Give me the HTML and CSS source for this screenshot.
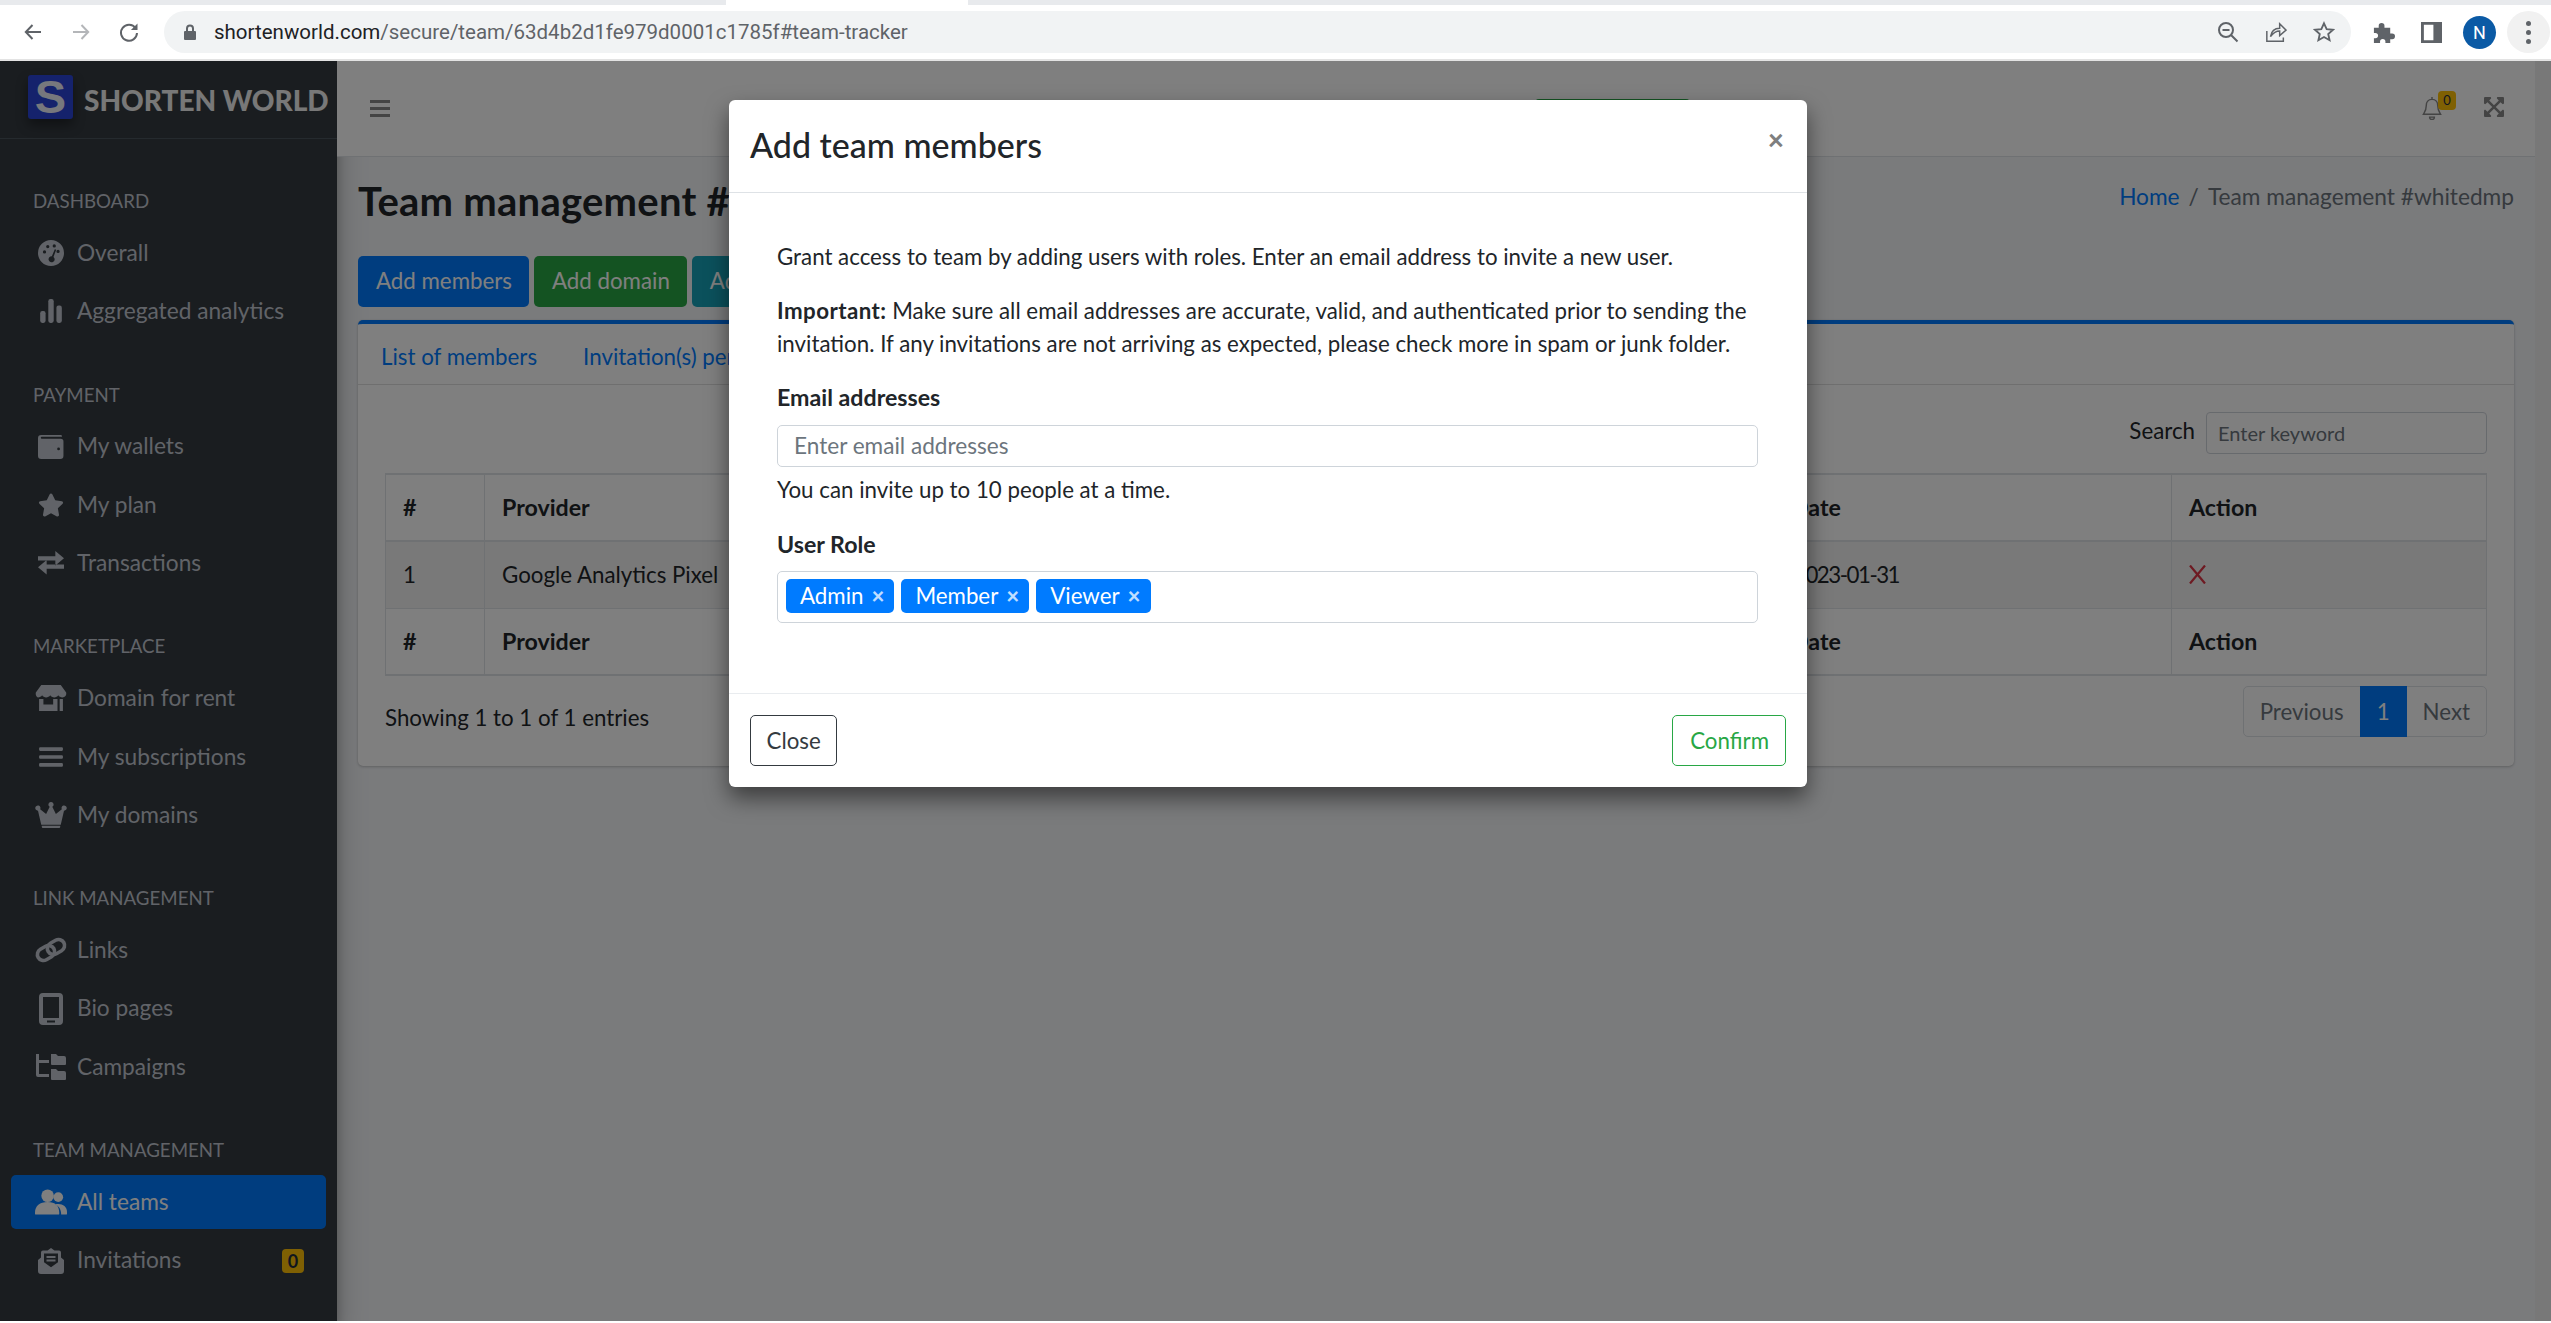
FILE: index.html
```html
<!DOCTYPE html>
<html lang="en">
<head>
<meta charset="utf-8">
<title>Team management</title>
<link rel="stylesheet" href="styles.css">
</head>
<body>
<div class="tabstrip"><div class="tab-gap"></div></div>
<div class="toolbar">
  <svg class="tb-icon" viewBox="0 0 20 20"><path d="M18 10H3M9.5 3L2.8 10l6.7 7" fill="none" stroke="#5f6368" stroke-width="2"/></svg>
  <svg class="tb-icon" viewBox="0 0 20 20"><path d="M2 10h15M10.5 3l6.7 7-6.7 7" fill="none" stroke="#b4b6b9" stroke-width="2"/></svg>
  <svg class="tb-icon" viewBox="0 0 20 20"><path d="M16.6 6.2A8 8 0 1 0 18 11" fill="none" stroke="#5f6368" stroke-width="2"/><path d="M18.5 1.5v6.6h-6.6z" fill="#5f6368"/></svg>
  <div class="omnibox">
    <svg class="lock" viewBox="0 0 12 16"><path d="M2 7V4.5a4 4 0 0 1 8 0V7h1a1 1 0 0 1 1 1v7a1 1 0 0 1-1 1H1a1 1 0 0 1-1-1V8a1 1 0 0 1 1-1zm2 0h4V4.500a2 2 0 0 0-4 0z" fill="#5f6368"/></svg>
    <span class="url"><span class="url-host">shortenworld.com</span>/secure/team/63d4b2d1fe979d0001c1785f#team-tracker</span>
    <svg class="om-icon" viewBox="0 0 22 22"><circle cx="9" cy="9" r="7" fill="none" stroke="#5f6368" stroke-width="2"/><path d="M5.500 9h7M14 14l6.500 6.500" stroke="#5f6368" stroke-width="2" fill="none"/></svg>
    <svg class="om-icon" viewBox="0 0 24 24"><path d="M2 11v11h18v-4" fill="none" stroke="#5f6368" stroke-width="1.600"/><path d="M6 17c1-6 5-9 10-9V3l7 7-7 6v-5c-4 0-7 2-10 6z" fill="none" stroke="#5f6368" stroke-width="1.600"/></svg>
    <svg class="om-icon" viewBox="0 0 24 24"><path d="M12 2.500l2.900 6.400 6.900.7-5.200 4.600 1.500 6.800L12 17.500 5.900 21l1.500-6.800L2.200 9.600l6.900-.7z" fill="none" stroke="#5f6368" stroke-width="2"/></svg>
  </div>
  <div class="tb-right">
    <svg class="ext-icon" viewBox="0 0 24 24"><path d="M2 7h5V5a3 3 0 0 1 6 0v2h6v6h2a3 3 0 0 1 0 6h-2v4h-5v-1.500a2.800 2.800 0 0 0-5.600 0V23H2v-5h1.500a2.800 2.800 0 0 0 0-5.600H2z" fill="#5f6368"/></svg>
    <svg class="panel-icon" viewBox="0 0 22 22"><path fill-rule="evenodd" d="M0 0h22v22H0zM3 3v16h10V3z" fill="#5f6368"/></svg>
    <div class="avatar">N</div>
    <div class="dots"><i></i><i></i><i></i></div>
  </div>
</div>
<div class="toolbar-line"></div>

<div class="app">
  <aside class="sidebar">
    <div class="brand">
      <span class="brand-logo">S</span>
      <span class="brand-text">SHORTEN WORLD</span>
    </div>
    <nav class="nav">
      <section class="nav-section">
        <h6 class="nav-header">DASHBOARD</h6>
        <a class="nav-link"><span class="nav-icon"><svg viewBox="0 0 24 24"><path fill-rule="evenodd" d="M12 0a12 12 0 1 1 0 24 12 12 0 0 1 0-24zM6 9.500a1.500 1.500 0 1 0 0 3 1.500 1.500 0 0 0 0-3zM9 4.500a1.500 1.500 0 1 0 0 3 1.500 1.500 0 0 0 0-3zM15 4a1.500 1.500 0 1 0 0 3 1.500 1.500 0 0 0 0-3zM18.500 9a1.500 1.500 0 1 0 0 3 1.500 1.500 0 0 0 0-3zM15.500 8.500L12.800 15a2.800 2.800 0 1 0 1.500.6l2.500-6.600z"/></svg></span>Overall</a>
        <a class="nav-link"><span class="nav-icon"><svg viewBox="0 0 24 24"><rect x="2" y="12" width="5" height="11" rx="2"/><rect x="9.500" y="1" width="5" height="22" rx="2"/><rect x="17" y="7" width="5" height="16" rx="2"/></svg></span>Aggregated analytics</a>
      </section>
      <section class="nav-section">
        <h6 class="nav-header">PAYMENT</h6>
        <a class="nav-link"><span class="nav-icon"><svg viewBox="0 0 24 24"><path fill-rule="evenodd" d="M3 1h18a1 1 0 0 1 1 1.500H3.500a.8.8 0 0 0 0 1.900H21a2.500 2.500 0 0 1 2.500 2.500V20a3 3 0 0 1-3 3H3a3 3 0 0 1-3-3V4a3 3 0 0 1 3-3zM19 12.500a1.300 1.300 0 1 0 0 2.600 1.300 1.300 0 0 0 0-2.600z"/></svg></span>My wallets</a>
        <a class="nav-link"><span class="nav-icon"><svg viewBox="0 0 576 512"><path d="M259.300 17.800L194 150.200 47.900 171.500c-26.200 3.800-36.700 36.100-17.700 54.600l105.700 103-25 145.500c-4.500 26.300 23.200 46 46.400 33.700L288 439.600l130.700 68.700c23.200 12.200 50.900-7.400 46.400-33.700l-25-145.500 105.700-103c19-18.500 8.500-50.800-17.700-54.600L382 150.200 316.700 17.800c-11.700-23.600-45.600-23.900-57.400 0z"/></svg></span>My plan</a>
        <a class="nav-link"><span class="nav-icon"><svg viewBox="0 0 24 24"><path d="M0 6h16V1l8 7-8 7v-5H0zM24 14H8V9.500L0 16.500l8 7V18h16z" transform="scale(1 .96)"/></svg></span>Transactions</a>
      </section>
      <section class="nav-section">
        <h6 class="nav-header">MARKETPLACE</h6>
        <a class="nav-link"><span class="nav-icon"><svg class="wide" viewBox="0 0 28 24"><path d="M5 0h18l5 7c.5 2.500-1 4.500-3.500 4.500-1.500 0-3-.7-3.800-2-.8 1.300-2.200 2-3.700 2s-3-.7-3.700-2c-.8 1.300-2.300 2-3.800 2s-3-.7-3.700-2c-.8 1.300-2.300 2-3.800 2C1 11.500-.5 9.500 0 7zM3 13h4v5h9v-5h4v11H3zM22 13h3v11h-3z"/></svg></span>Domain for rent</a>
        <a class="nav-link"><span class="nav-icon"><svg viewBox="0 0 24 24"><rect x="1" y="3" width="22" height="3.400" rx="1"/><rect x="1" y="10.300" width="22" height="3.400" rx="1"/><rect x="1" y="17.600" width="22" height="3.400" rx="1"/></svg></span>My subscriptions</a>
        <a class="nav-link"><span class="nav-icon"><svg class="wide" viewBox="0 0 28 24"><path d="M14 0a2.300 2.300 0 0 1 1.200 4.300L18.500 11 24 6.700a2.400 2.400 0 1 1 2 1.300L23 21H5L2 8a2.400 2.400 0 1 1 2-1.300L9.500 11l3.300-6.700A2.300 2.300 0 0 1 14 0zM5.500 22h17v1a1 1 0 0 1-1 1h-15a1 1 0 0 1-1-1z"/></svg></span>My domains</a>
      </section>
      <section class="nav-section">
        <h6 class="nav-header">LINK MANAGEMENT</h6>
        <a class="nav-link"><span class="nav-icon"><svg class="wide" viewBox="0 0 32 24"><g fill="none" stroke="currentColor" stroke-width="3.600"><rect x="2" y="9" width="18" height="12" rx="6" transform="rotate(-30 11 15)"/><rect x="12" y="3" width="18" height="12" rx="6" transform="rotate(-30 21 9)"/></g></svg></span>Links</a>
        <a class="nav-link"><span class="nav-icon"><svg class="tall" viewBox="0 0 24 32"><path fill-rule="evenodd" d="M4 0h16a4 4 0 0 1 4 4v24a4 4 0 0 1-4 4H4a4 4 0 0 1-4-4V4a4 4 0 0 1 4-4zM4 4v21h16V4zM8 27.500v2h8v-2z"/></svg></span>Bio pages</a>
        <a class="nav-link"><span class="nav-icon"><svg class="wide" viewBox="0 0 30 26"><path d="M0 0h3v6h10v3H3v11h10v3H2a2 2 0 0 1-2-2zM15 0h5l2 2h6a2 2 0 0 1 2 2v6a1 1 0 0 1-1 1H16a1 1 0 0 1-1-1zM15 15h5l2 2h6a2 2 0 0 1 2 2v6a1 1 0 0 1-1 1H16a1 1 0 0 1-1-1z"/></svg></span>Campaigns</a>
      </section>
      <section class="nav-section">
        <h6 class="nav-header">TEAM MANAGEMENT</h6>
        <a class="nav-link active"><span class="nav-icon"><svg class="wide" viewBox="0 0 33 26"><circle cx="13" cy="6.500" r="6.500"/><circle cx="24" cy="8" r="5"/><path d="M0 24c0-7 5-11 13-11s12 4 12 11v1a1 1 0 0 1-1 1H1a1 1 0 0 1-1-1zM27 26h5a1 1 0 0 0 1-1v-2c0-5-4-8-9-8-1 0-2 .1-3 .4 3.500 2 6 5 6 10.600z"/></svg></span>All teams</a>
        <a class="nav-link"><span class="nav-icon"><svg viewBox="0 0 26 26"><path fill-rule="evenodd" d="M13 0l3.500 2.500H21a2 2 0 0 1 2 2v5l3 2.500v11a3 3 0 0 1-3 3H3a3 3 0 0 1-3-3V12l3-2.500v-5a2 2 0 0 1 2-2h4.500zM6 5.500v8.700l7 5 7-5V5.500zM8.500 8h9v2h-9zM8.500 11.500h9v2h-9z"/></svg></span>Invitations<span class="nav-badge">0</span></a>
      </section>
    </nav>
  </aside>

  <main class="main">
    <header class="topbar">
      <svg class="hamburger" viewBox="0 0 20 17"><path d="M0 0h20v3H0zM0 7h20v3H0zM0 14h20v3H0z" fill="currentColor"/></svg>
      <span class="upgrade">Upgrade</span>
      <span class="bell-wrap">
        <svg class="bell" viewBox="0 0 20 24"><path d="M10 2.500a1 1 0 0 1 0 0c-4 0-6 3-6 6.500 0 5-2 7-3 9h18c-1-2-3-4-3-9 0-3.500-2-6.500-6-6.500zM7.500 21h5a2.500 2.500 0 0 1-5 0zM10 0v3" fill="none" stroke="currentColor" stroke-width="1.500"/></svg>
        <span class="bell-badge">0</span>
      </span>
      <svg class="expand" viewBox="0 32 448 448"><path d="M448 344v112a23.940 23.940 0 0 1-24 24H312c-21.390 0-32.090-25.900-17-41l36.200-36.200L224 295.600 116.770 402.900 153 439c15.090 15.100 4.390 41-17 41H24a23.940 23.940 0 0 1-24-24V344c0-21.400 25.890-32.100 41-17l36.190 36.200L184.460 256 77.180 148.700 41 185c-15.100 15.100-41 4.400-41-17V56a23.940 23.940 0 0 1 24-24h112c21.390 0 32.090 25.900 17 41l-36.200 36.200L224 216.400l107.230-107.300L295 73c-15.090-15.100-4.390-41 17-41h112a23.940 23.940 0 0 1 24 24v112c0 21.400-25.890 32.100-41 17l-36.190-36.200L263.540 256l107.280 107.300L407 327.100c15.100-15.200 41-4.500 41 16.900z" fill="currentColor"/></svg>
    </header>
    <div class="content">
      <div class="page-head">
        <h1 class="page-title">Team management #whitedmp</h1>
        <ol class="breadcrumb"><li class="crumb-link">Home</li><li class="crumb-sep">/</li><li>Team management #whitedmp</li></ol>
      </div>
      <div class="actions">
        <button class="btn btn-primary">Add members</button>
        <button class="btn btn-success">Add domain</button>
        <button class="btn btn-info">Add campaign</button>
      </div>
      <section class="card">
        <div class="card-tabs">
          <span class="tab">List of members</span>
          <span class="tab">Invitation(s) pending</span>
        </div>
        <div class="card-body">
          <div class="search-row">
            <label class="search-label">Search</label>
            <input class="search-input" placeholder="Enter keyword">
          </div>
          <table class="table">
            <colgroup><col class="c-num"><col class="c-prov"><col class="c-date"><col class="c-act"></colgroup>
            <thead><tr><th>#</th><th>Provider</th><th class="th-date">Date</th><th>Action</th></tr></thead>
            <tbody><tr><td>1</td><td>Google Analytics Pixel</td><td class="td-date">2023-01-31</td><td><svg class="x-icon" viewBox="0 0 17 19"><path d="M1 .5l15 18M16 .5l-15 18" stroke="#dc3545" stroke-width="2.200" fill="none"/></svg></td></tr></tbody>
            <tfoot><tr><th>#</th><th>Provider</th><th class="th-date">Date</th><th>Action</th></tr></tfoot>
          </table>
          <div class="table-foot">
            <span class="showing">Showing 1 to 1 of 1 entries</span>
            <div class="pagination"><span class="page">Previous</span><span class="page current">1</span><span class="page">Next</span></div>
          </div>
        </div>
      </section>
    </div>
  </main>
  <div class="scrollbar"></div>

  <div class="scrim"></div>
  <div class="modal">
    <div class="modal-header">
      <h5 class="modal-title">Add team members</h5>
      <span class="modal-close">×</span>
    </div>
    <div class="modal-body">
      <p class="para">Grant access to team by adding users with roles. Enter an email address to invite a new user.</p>
      <p class="para"><strong class="strong">Important:</strong> Make sure all email addresses are accurate, valid, and authenticated prior to sending the invitation. If any invitations are not arriving as expected, please check more in spam or junk folder.</p>
      <label class="field-label">Email addresses</label>
      <input class="field-input" placeholder="Enter email addresses">
      <p class="help">You can invite up to 10 people at a time.</p>
      <label class="field-label role-label">User Role</label>
      <div class="tag-box">
        <span class="tag">Admin<span class="tag-x">×</span></span>
        <span class="tag">Member<span class="tag-x">×</span></span>
        <span class="tag">Viewer<span class="tag-x">×</span></span>
      </div>
    </div>
    <div class="modal-footer">
      <button class="btn btn-outline-dark">Close</button>
      <button class="btn btn-outline-success">Confirm</button>
    </div>
  </div>
</div>
<div class="page-end"></div>
</body>
</html>
```

FILE: styles.css
```css
* { box-sizing: border-box; }
html, body { margin: 0; height: 100%; overflow: hidden; background: #fff; }
body { font-family: "Lato", "Noto Sans", sans-serif; font-size: 22.3px; line-height: 32.4px; color: #212529; }

/* browser chrome */
.tabstrip { height: 5px; background: #e8eaed; }
.tab-gap { width: 242px; height: 5px; margin-left: 726px; background: #fff; }
.toolbar { height: 54px; padding: 6px 1px 1px 23px; display: flex; align-items: flex-start; background: #fff; }
.tb-icon { width: 20px; height: 20px; margin: 11px 28px 0 0; flex: none; }
.omnibox { width: 2187px; height: 42px; margin-left: -3px; padding: 0 16px 0 20px; border-radius: 21px; background: #f1f3f4; display: flex; align-items: center; flex: none; }
.lock { width: 12px; height: 16px; flex: none; }
.url { margin-left: 18px; font-family: "Roboto", sans-serif; font-size: 20.500px; color: #5f6368; flex: 1; white-space: nowrap; }
.url-host { color: #202124; }
.om-icon { width: 22px; height: 22px; margin-left: 26px; flex: none; }
.tb-right { display: flex; align-items: center; flex: 1; height: 42px; padding-left: 21px; }
.ext-icon { width: 23px; height: 23px; flex: none; }
.panel-icon { width: 21px; height: 21px; margin-left: 26px; flex: none; }
.avatar { width: 33px; height: 33px; margin-left: 21px; border-radius: 50%; background: #0b5aa5; color: #fff; font: 18px/33px "Roboto", sans-serif; text-align: center; flex: none; }
.dots { width: 43px; height: 42px; margin-left: 11px; border-radius: 50%; background: #f1f1f1; display: flex; flex-direction: column; align-items: center; justify-content: center; gap: 4px; flex: none; }
.dots i { width: 5px; height: 5px; border-radius: 50%; background: #5f6368; }
.toolbar-line { height: 2px; background: #e3e3e3; }

/* application frame */
.app { position: relative; display: flex; height: 1260px; overflow: hidden; background: #f4f6f9; }
.page-end { height: 2px; background: #fff; }

/* sidebar */
.sidebar { width: 337px; flex: none; background: #343a40; color: #c2c7d0; box-shadow: 0 14px 28px rgba(0,0,0,.25), 0 10px 10px rgba(0,0,0,.22); }
.brand { height: 78px; padding: 14px 0 0 28px; display: flex; align-items: flex-start; border-bottom: 1px solid #4b545c; }
.brand-logo { width: 45px; height: 44px; border-radius: 3px; background: #2a44d8; color: #eef0fa; font: 700 47px/44px "Liberation Sans", sans-serif; text-align: center; box-shadow: 0 6px 12px rgba(0,0,0,.4); flex: none; }
.brand-text { margin: 3px 0 0 11px; font-size: 28px; line-height: 44px; font-weight: 900; color: #f0f0f0; white-space: nowrap; }
.nav { padding: 36px 11px 0; }
.nav-section { margin-bottom: 30.300px; }
.nav-header { margin: 0; height: 51px; padding-left: 22px; font-size: 18.700px; line-height: 52px; font-weight: 400; color: #c2c7d0; }
.nav-link { height: 54px; margin-bottom: 4.300px; padding: 0 22px; display: flex; align-items: center; border-radius: 5px; font-size: 22.700px; color: #c2c7d0; white-space: nowrap; }
.nav-link.active { background: #007bff; color: #fff; }
.nav-icon { width: 36px; margin-right: 8px; display: flex; justify-content: center; flex: none; }
.nav-icon svg { width: 26px; height: 26px; fill: currentColor; }
.nav-icon svg.wide { width: 32px; }
.nav-icon svg.tall { height: 32px; }
.nav-badge { margin-left: auto; width: 22px; height: 24px; border-radius: 4px; background: #ffc107; color: #1f2d3d; font-size: 18px; line-height: 24px; font-weight: 700; text-align: center; }

/* main column */
.main { flex: 1; min-width: 0; display: flex; flex-direction: column; }
.scrollbar { width: 16px; flex: none; background: #f1f1f1; }
.topbar { height: 96px; padding: 0 31px 0 33px; display: flex; align-items: center; background: #fff; border-bottom: 1px solid #dee2e6; color: #888; position: relative; }
.hamburger { width: 20px; height: 17px; margin-top: -1px; flex: none; }
.upgrade { width: 157px; height: 51px; margin: 38px auto 0 1144px; align-self: flex-start; border-radius: 5px; background: #28a745; color: #fff; text-align: center; line-height: 51px; flex: none; }
.bell-wrap { width: 62px; height: 28px; display: block; position: relative; margin-top: -2px; flex: none; }
.bell { position: absolute; left: 0; top: 3px; width: 20px; height: 23px; }
.bell-badge { position: absolute; left: 16px; top: -3px; width: 18px; height: 19px; border-radius: 4px; background: #ffc107; color: #1f2d3d; font-size: 13px; line-height: 19px; text-align: center; }
.expand { width: 20px; height: 20px; margin-top: -3px; flex: none; }
.content { flex: 1; padding: 0 21px; }
.page-head { height: 99px; padding-top: 21px; display: flex; justify-content: space-between; align-items: flex-start; }
.page-title { margin: 0; font-size: 40px; line-height: 46px; font-weight: 700; letter-spacing: .25px; white-space: nowrap; }
.breadcrumb { margin: 3px 0 0; padding: 0; list-style: none; display: flex; font-size: 22.700px; color: #6c757d; }
.crumb-link { color: #007bff; }
.crumb-sep { margin: 0 9px; }
.actions { display: flex; gap: 5px; margin-bottom: 13px; }

/* buttons */
.btn { height: 51px; padding: 0 16px 0 17px; border: 1px solid transparent; border-radius: 5px; font: inherit; background: none; white-space: nowrap; }
.btn-primary { background: #007bff; color: #fff; }
.btn-success { background: #28a745; color: #fff; }
.btn-info { background: #17a2b8; color: #fff; }
.btn-outline-dark { padding: 0 15.500px; border-color: #343a40; color: #343a40; }
.btn-outline-success { border-color: #28a745; color: #28a745; }

/* card */
.card { background: #fff; border-top: 4px solid #007bff; border-radius: 5px; box-shadow: 0 0 1px rgba(0,0,0,.125), 0 1px 3px rgba(0,0,0,.2); }
.card-tabs { height: 61px; padding: 17px 0 0 23px; display: flex; gap: 46px; border-bottom: 1px solid rgba(0,0,0,.125); }
.tab { color: #007bff; white-space: nowrap; }
.card-body { padding: 27px 27px 29px; }
.search-row { height: 42px; display: flex; justify-content: flex-end; align-items: center; gap: 11px; margin-bottom: 19px; }
.search-label { margin-top: -3px; }
.search-input { width: 281px; height: 42px; padding: 0 11px; border: 1px solid #ced4da; border-radius: 4px; font: 20px "Lato", sans-serif; background: #fff; }
.table { width: 100%; border-collapse: collapse; table-layout: fixed; border: 1px solid #dee2e6; }
.c-num { width: 99px; }
.c-prov { width: 1292px; }
.c-date { width: 395px; }
.table th, .table td { height: 67px; padding: 0 17px; text-align: left; border: 1px solid #dee2e6; font-weight: 400; }
.table th { font-size: 23.200px; font-weight: 700; }
.table .th-date { padding-left: 14px; }
.table .td-date { letter-spacing: -1.500px; }
.table thead th { border-top-width: 2px; border-bottom-width: 2px; }
.table tfoot th { border-bottom-width: 2px; }
.table tbody tr { background: rgba(0,0,0,.05); }
.x-icon { display: block; width: 17px; height: 19px; }
.table-foot { margin-top: 10px; display: flex; justify-content: space-between; }
.showing { margin-top: 16px; }
.pagination { height: 51px; display: flex; border: 1px solid #dee2e6; border-radius: 5px; }
.page { padding: 0 16px; color: #6c757d; line-height: 49px; }
.page.current { width: 47px; padding: 0; margin: -1px 0; background: #007bff; color: #fff; line-height: 51px; text-align: center; }

/* overlay */
.scrim { position: absolute; inset: 0; background: rgba(0,0,0,.5); }
.modal { position: absolute; left: 729px; top: 39px; width: 1078px; border-radius: 6px; background: #fff; box-shadow: 0 11px 22px rgba(0,0,0,.5); }
.modal-header { height: 93px; padding: 25px 21px 0; display: flex; justify-content: space-between; align-items: flex-start; border-bottom: 1px solid #dee2e6; }
.modal-title { margin: 0; font-size: 34px; line-height: 40px; font-weight: 500; }
.modal-close { margin: -6px 2px 0 0; font-size: 28px; line-height: 40px; font-weight: 900; color: #7f7f7f; }
.modal-body { padding: 48px 49px 70px 48px; }
.para { margin: 0 0 22px; }
.strong { font-weight: 700; letter-spacing: .45px; }
.field-label { display: block; margin-bottom: 12px; font-size: 23.200px; line-height: 30.400px; font-weight: 700; }
.field-input { display: block; width: 100%; height: 42px; padding: 0 16px; border: 1px solid #ced4da; border-radius: 5px; font: 22.600px/32px "Lato", sans-serif; color: #495057; background: #fff; }
.field-input::placeholder, .search-input::placeholder { color: #6c757d; opacity: 1; }
.help { margin: 7px 0 23px; }
.tag-box { height: 52px; padding: 7px 8px; display: flex; gap: 7px; border: 1px solid #ced4da; border-radius: 5px; }
.tag { height: 34px; padding: 0 10px 0 14px; display: flex; align-items: center; border-radius: 5px; background: #007bff; color: #fff; }
.tag-x { margin-left: 8px; color: rgba(255,255,255,.75); font-weight: 900; }
.modal-footer { height: 94px; padding: 21px; display: flex; justify-content: space-between; border-top: 1px solid #e9ecef; }
```
